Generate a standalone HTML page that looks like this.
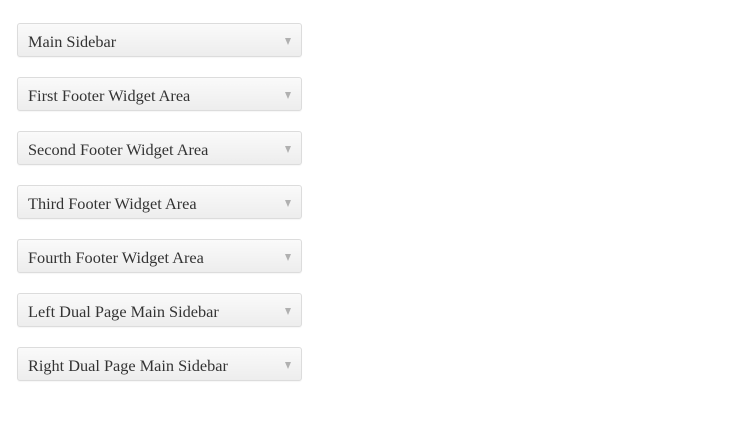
<!DOCTYPE html>
<html><head><style>
body{margin:0;background:#fff;width:740px;height:443px;overflow:hidden}
.b{position:absolute;left:17px;width:283px;height:32px;border:1px solid #dcdcdc;border-radius:3px;background:linear-gradient(#fafafa,#ededed);box-shadow:0 1px 1px rgba(0,0,0,.04);font-family:"Liberation Serif",serif;font-size:16.3px;color:#333;line-height:36px;box-sizing:content-box}
.b span{position:absolute;left:10px;top:0;white-space:nowrap}
.b i{position:absolute;right:10px;top:14px;width:0;height:0;border-left:3.5px solid transparent;border-right:3.5px solid transparent;border-top:7px solid #b0b0b0}
</style></head><body>
<div class="b" style="top:23px"><span>Main Sidebar</span><i></i></div>
<div class="b" style="top:77px"><span>First Footer Widget Area</span><i></i></div>
<div class="b" style="top:131px"><span>Second Footer Widget Area</span><i></i></div>
<div class="b" style="top:185px"><span>Third Footer Widget Area</span><i></i></div>
<div class="b" style="top:239px"><span>Fourth Footer Widget Area</span><i></i></div>
<div class="b" style="top:293px"><span>Left Dual Page Main Sidebar</span><i></i></div>
<div class="b" style="top:347px"><span>Right Dual Page Main Sidebar</span><i></i></div>
</body></html>
